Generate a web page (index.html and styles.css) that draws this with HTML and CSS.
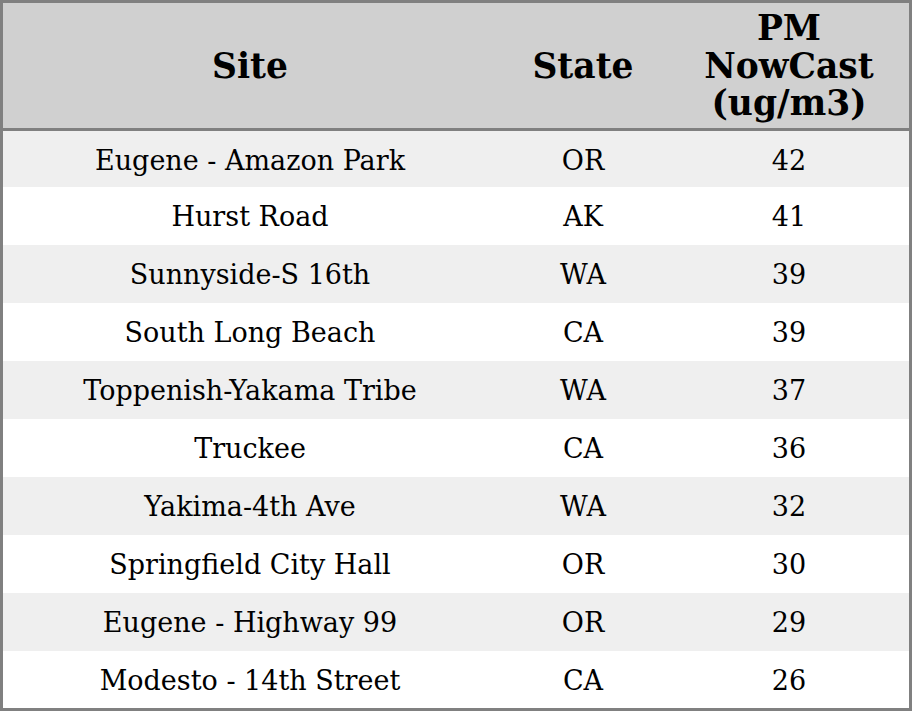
FILE: index.html
```html
<!DOCTYPE html>
<html>
<head>
<meta charset="utf-8">
<link rel="stylesheet" href="styles.css">
</head>
<body>
<div class="frame">
<table class="data">
<thead>
<tr><th class="c-site">Site</th><th class="c-state">State</th><th class="c-pm">PM<br>NowCast<br>(ug/m3)</th></tr>
</thead>
<tbody>
<tr><td>Eugene - Amazon Park</td><td>OR</td><td>42</td></tr>
<tr><td>Hurst Road</td><td>AK</td><td>41</td></tr>
<tr><td>Sunnyside-S 16th</td><td>WA</td><td>39</td></tr>
<tr><td>South Long Beach</td><td>CA</td><td>39</td></tr>
<tr><td>Toppenish-Yakama Tribe</td><td>WA</td><td>37</td></tr>
<tr><td>Truckee</td><td>CA</td><td>36</td></tr>
<tr><td>Yakima-4th Ave</td><td>WA</td><td>32</td></tr>
<tr><td>Springfield City Hall</td><td>OR</td><td>30</td></tr>
<tr><td>Eugene - Highway 99</td><td>OR</td><td>29</td></tr>
<tr><td>Modesto - 14th Street</td><td>CA</td><td>26</td></tr>
</tbody>
</table>
</div>
</body>
</html>
```
FILE: styles.css
```css
html, body {
  margin: 0;
  padding: 0;
  background: #ffffff;
}
.frame {
  width: 912px;
  height: 711px;
  box-sizing: border-box;
  border: 3px solid #808080;
  overflow: hidden;
}
.data {
  width: 906px;
  border-collapse: separate;
  border-spacing: 0;
  table-layout: fixed;
  font-family: "DejaVu Serif", serif;
  color: #000;
}
.data th {
  background: #d0d0d0;
  font-size: 34.5px;
  font-weight: bold;
  line-height: 37.5px;
  height: 128px;
  box-sizing: border-box;
  padding: 2px 0 0 0;
  text-align: center;
  vertical-align: middle;
  border-bottom: 3px solid #808080;
}
.c-site { width: 494px; }
.c-state { width: 172px; }
.c-pm { width: 240px; }
.data td {
  font-size: 27px;
  height: 58px;
  box-sizing: border-box;
  padding: 1px 0 0 0;
  text-align: center;
  vertical-align: middle;
}
.data tbody tr:first-child td {
  height: 56px;
  padding-top: 2px;
}
.data tbody tr:last-child td {
  height: 57px;
}
.data tbody tr:nth-child(odd) td {
  background: #efefef;
}
.data tbody tr:nth-child(even) td {
  background: #ffffff;
}
```
